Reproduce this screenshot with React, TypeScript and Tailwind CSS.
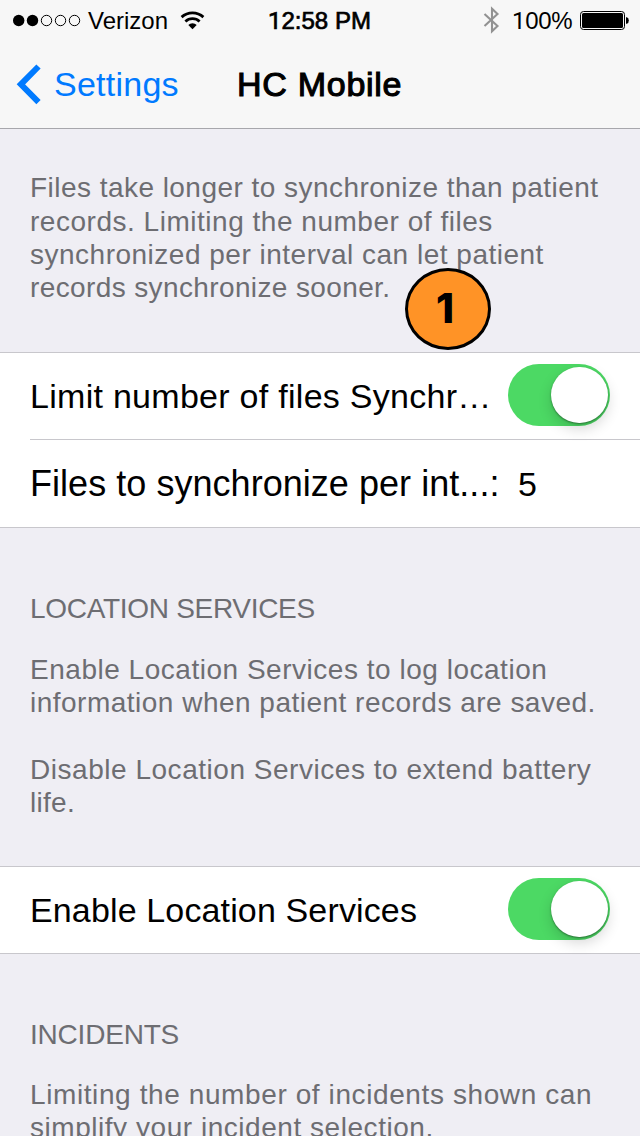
import type { ReactNode } from "react";

function StatusBar() {
  return (
    <div className="flex h-10 items-center text-[24px] leading-10 whitespace-pre text-black">
      <div className="flex w-[268px] items-center">
        <svg className="ml-3 shrink-0" width="70" height="14" viewBox="0 0 70 14">
          <circle cx="6.7" cy="7.5" r="5.7" />
          <circle cx="20.5" cy="7.5" r="5.7" />
          <g fill="none" stroke="black" strokeWidth="1">
            <circle cx="34.5" cy="7.5" r="5.2" />
            <circle cx="48.5" cy="7.5" r="5.2" />
            <circle cx="62.5" cy="7.5" r="5.2" />
          </g>
        </svg>
        <span className="ml-[6px] w-[80px] pt-[2px]">Verizon</span>
        <svg className="ml-[12px]" width="26" height="20" viewBox="0 0 26 20">
          <g fill="none" stroke="black" strokeWidth="2.8">
            <path d="M1.6 7.1a16.2 16.2 0 0 1 21.8 0" />
            <path d="M5.4 11.5a10.4 10.4 0 0 1 14.2 0" />
          </g>
          <path d="M12.5 19.2 8.3 15a6 6 0 0 1 8.4 0Z" />
        </svg>
      </div>
      <span className="w-[215px] pt-[2px] [-webkit-text-stroke:0.7px_black]">
        <span className="font-['Roboto']">1</span>2:58 PM
      </span>
      <svg width="18" height="28" viewBox="0 0 18 28" fill="none" stroke="#929292" strokeWidth="2.1">
        <path d="M1.5 8 14.5 20 9 25.2V2.8L14.5 8 1.5 20" />
      </svg>
      <span className="ml-[11px] w-[68px] pt-[2px] tracking-[-0.3px]">
        <span className="font-['Roboto']">1</span>00%
      </span>
      <svg width="50" height="20" viewBox="0 0 50 20">
        <rect x="0.5" y="1.5" width="44" height="18" rx="3" fill="none" stroke="black" />
        <rect x="2" y="3" width="41" height="15" rx="1.5" />
        <path d="M46 7.2h.8q2 .5 2 3.3t-2 3.3H46Z" />
      </svg>
    </div>
  );
}

function Toggle() {
  return (
    <div className="mb-[2px] flex h-[62px] w-[102px] shrink-0 items-center justify-end rounded-full bg-[#4cd964] pr-[2.5px]">
      <div className="h-[56.5px] w-[56.5px] rounded-full bg-white shadow-[0_1px_2px_rgba(0,0,0,0.4),0_6px_14px_rgba(0,0,0,0.16)]" />
    </div>
  );
}

function Row({ children }: { children: ReactNode }) {
  return <div className="flex items-center pr-[30px] pl-[30px] text-[34px] leading-[40px] whitespace-pre text-black">{children}</div>;
}

function Line({ className = "", children }: { className?: string; children?: ReactNode }) {
  return <div className={"h-[33.3px] whitespace-nowrap " + className}><span>{children}</span></div>;
}

export default function App() {
  return (
    <div className="flex h-[1136px] w-[640px] flex-col overflow-hidden bg-[#efeef4] font-['Liberation_Sans',Arial,sans-serif] text-[28px] leading-[33.3px] text-[#6d6d72]">
      <header className="h-[129px] shrink-0 border-b border-[#a7a7ac] bg-[#f7f7f7]">
        <StatusBar />
        <nav className="flex h-[88px] items-center text-[34px] leading-[40px] whitespace-nowrap">
          <svg className="ml-4 shrink-0" width="26" height="42" viewBox="0 0 26 42" fill="none" stroke="#007aff" strokeWidth="6">
            <path d="M22.5 3.5 4.9 21.3 22.5 39.1" />
          </svg>
          <span className="ml-[12px] w-[183px] tracking-[0.25px] text-[#007aff]">Settings</span>
          <h1 className="tracking-[0.72px] text-black [-webkit-text-stroke:1.1px_black]">HC Mobile</h1>
        </nav>
      </header>

      <section className="relative h-[223px] shrink-0 pt-[42.4px] pl-[30px]">
        <Line className="tracking-[0.46px]">Files take longer to synchronize than patient</Line>
        <Line className="tracking-[0.52px]">records. Limiting the number of files</Line>
        <Line className="tracking-[0.5px]">synchronized per interval can let patient</Line>
        <Line className="tracking-[0.38px]">records synchronize sooner.</Line>
        <div className="absolute top-[139px] left-[405px] flex h-[82px] w-[86px] items-center justify-center rounded-[50%] border-[3px] border-black bg-[#ff9326] pr-[6px] font-['Inter'] text-[41px] font-extrabold text-black">
          1
        </div>
      </section>

      <section className="h-[176px] shrink-0 border-y border-[#c8c7cc] bg-white">
        <Row>
          <div className="flex h-[86px] w-[478px] items-center tracking-[0.28px]">Limit number of files Synchr…</div>
          <Toggle />
        </Row>
        <div className="ml-[30px] h-px bg-[#c8c7cc]" />
        <Row>
          <div className="flex h-[87px] w-[488px] items-center pt-[1px] text-[36px] tracking-[0.04px]">Files to synchronize per int...:</div>
          <span>5</span>
        </Row>
      </section>

      <section className="h-[338px] shrink-0 pt-[64px] pl-[30px]">
        <Line className="mb-[27.4px] tracking-[-0.3px]">LOCATION SERVICES</Line>
        <Line className="tracking-[0.52px]">Enable Location Services to log location</Line>
        <Line className="tracking-[0.49px]">information when patient records are saved.</Line>
        <Line />
        <Line className="tracking-[0.53px]">Disable Location Services to extend battery</Line>
        <Line className="tracking-[0.3px]">life.</Line>
      </section>

      <section className="h-[88px] shrink-0 border-y border-[#c8c7cc] bg-white">
        <Row>
          <div className="flex h-[86px] w-[478px] items-center tracking-[0.14px]">Enable Location Services</div>
          <Toggle />
        </Row>
      </section>

      <section className="pt-[64px] pl-[30px]">
        <Line className="mb-[26.6px] tracking-[-0.2px]">INCIDENTS</Line>
        <Line className="tracking-[0.6px]">Limiting the number of incidents shown can</Line>
        <Line className="tracking-[0.54px]">simplify your incident selection.</Line>
      </section>
    </div>
  );
}
